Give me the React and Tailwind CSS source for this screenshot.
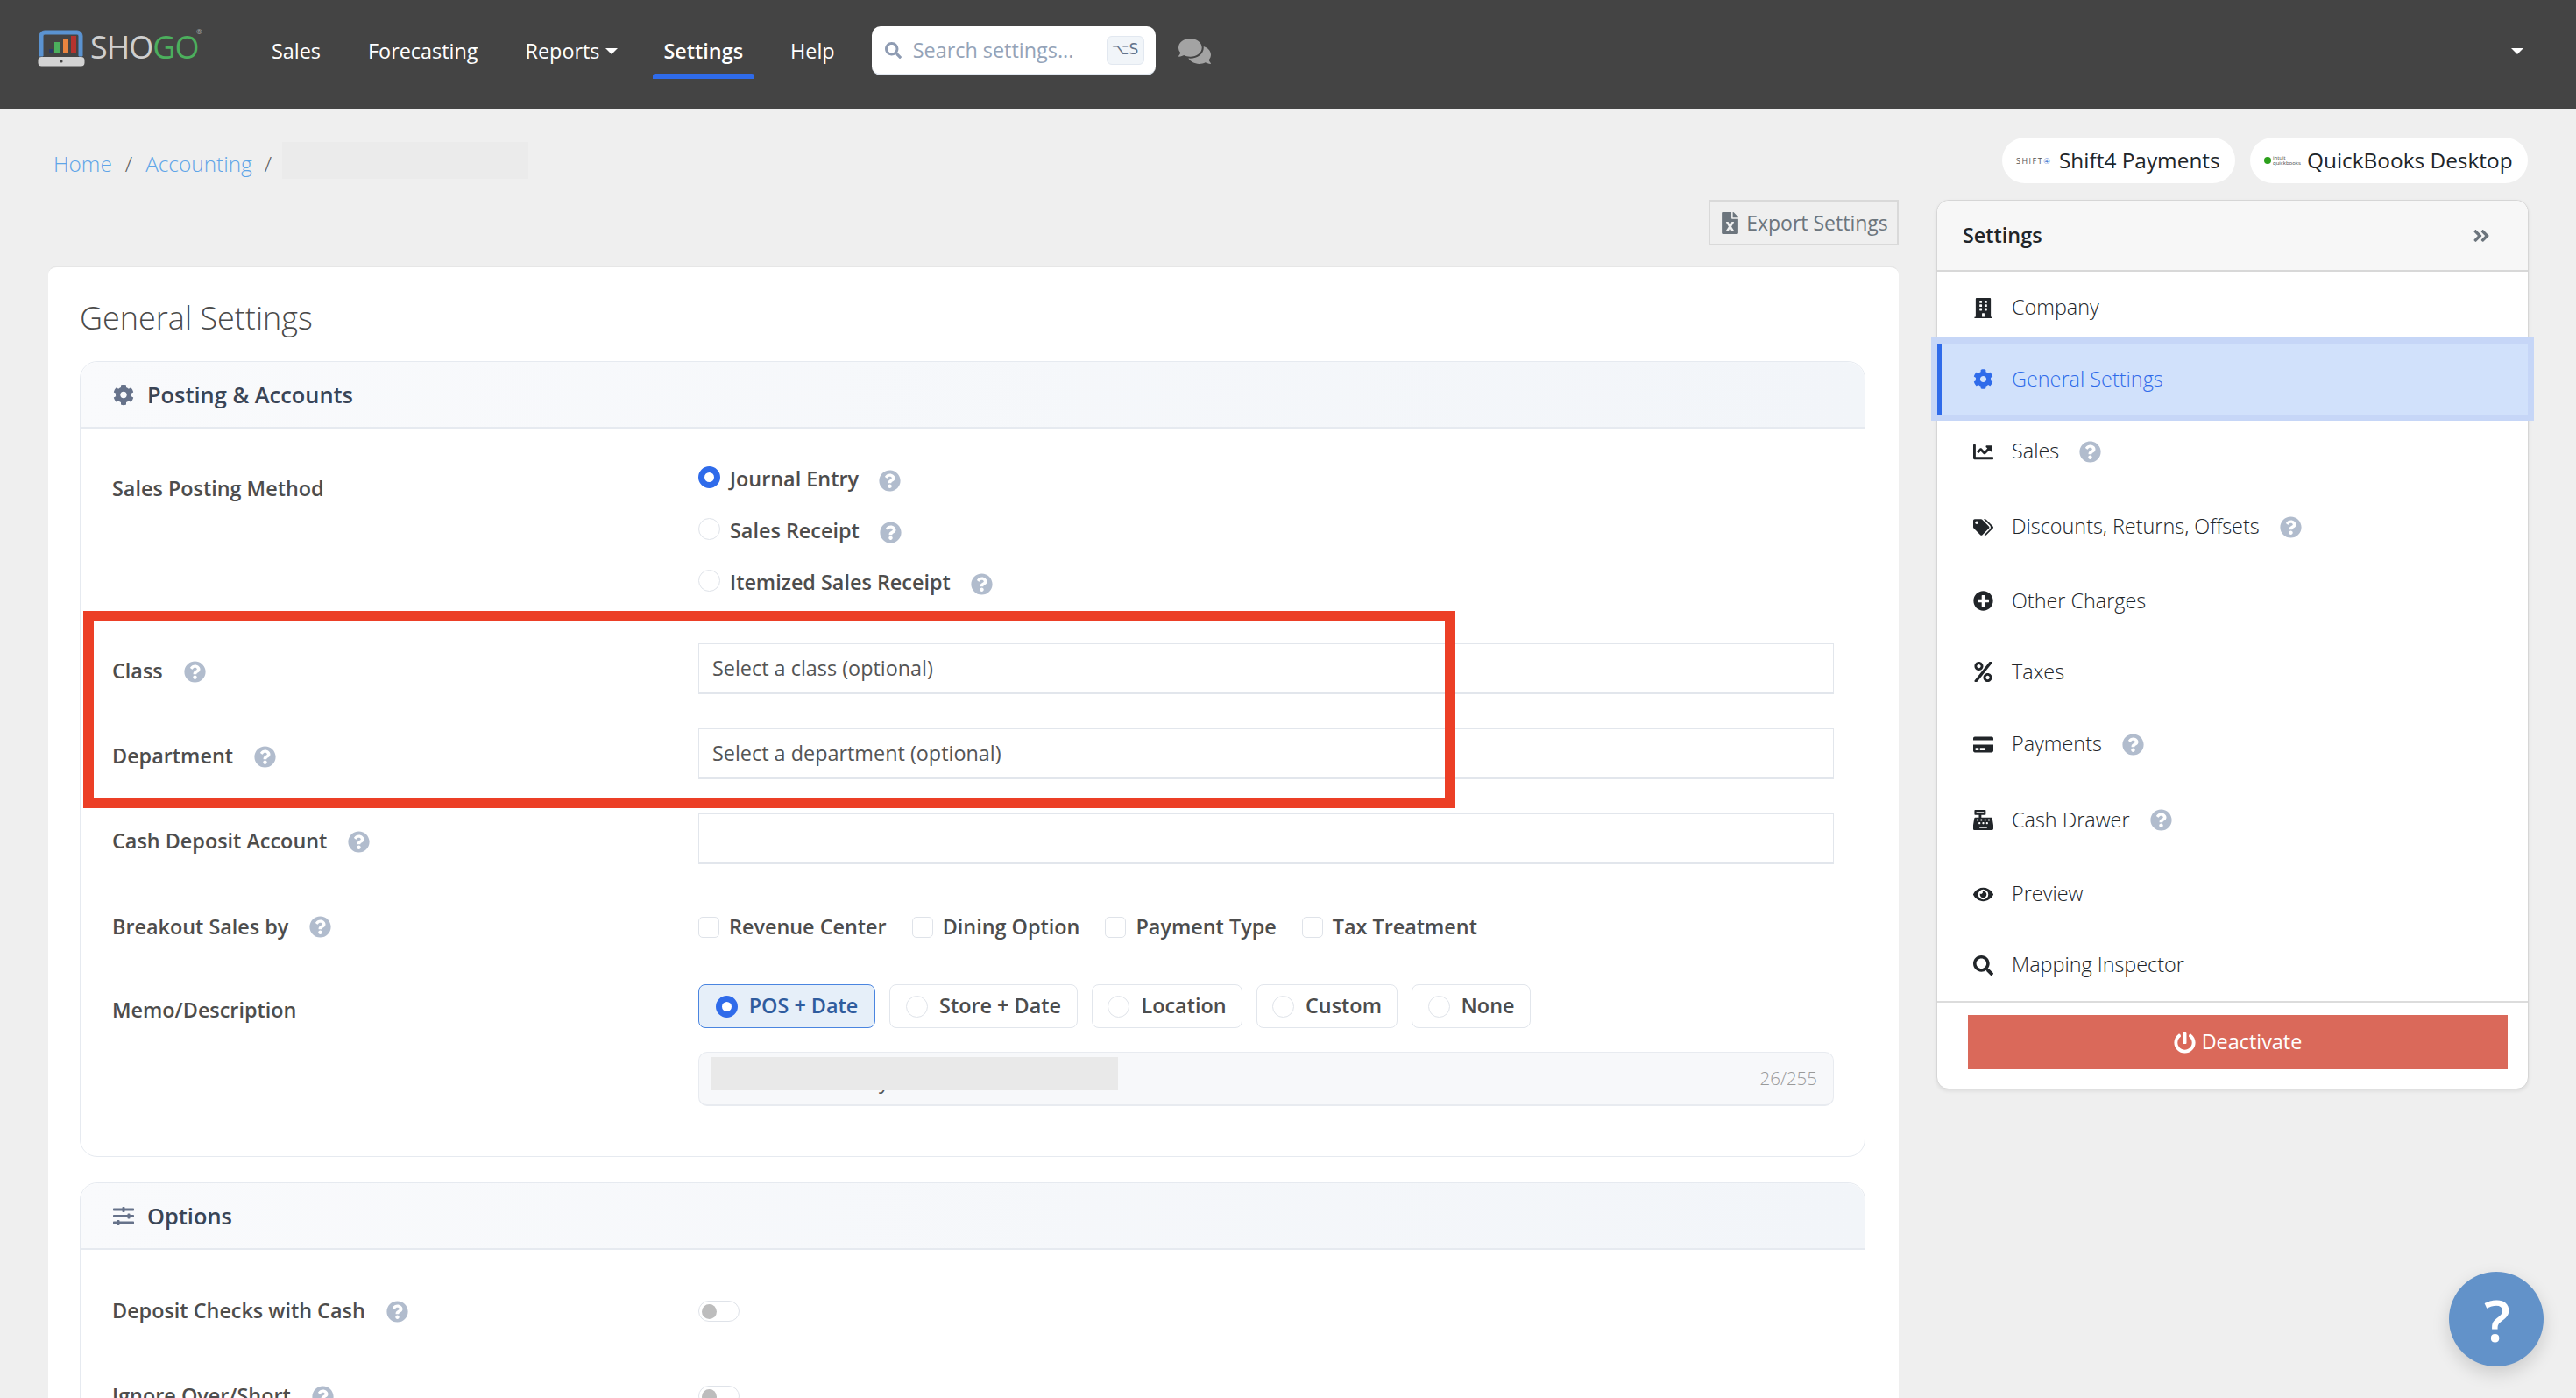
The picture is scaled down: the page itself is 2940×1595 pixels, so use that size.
import React from "react";
import {
  FaBuilding, FaCog, FaChartLine, FaTags, FaPlusCircle, FaPercent, FaCreditCard, FaCashRegister,
  FaEye, FaSearch, FaPowerOff, FaSlidersH, FaQuestionCircle, FaComments, FaFileExcel, FaAngleDoubleRight,
} from "react-icons/fa";

const Help = ({ className = "" }) => <FaQuestionCircle className={`text-[#b1bccd] text-[25px] shrink-0 ${className}`} />;

const Caret = ({ className = "" }) => (
  <span className={`inline-block w-0 h-0 border-x-[7px] border-x-transparent border-t-[7px] ${className}`} />
);

function Logo() {
  return (
    <div className="flex items-center w-[230px] ml-[43px] mt-[-10px] relative">
      <svg width="54" height="43" viewBox="0 0 54 43" className="shrink-0">
        <path d="M2 31V8a6 6 0 0 1 6-6h37a6 6 0 0 1 6 6v23h-4V8a2 2 0 0 0-2-2H8a2 2 0 0 0-2 2v23z" fill="#5b93d1" stroke="#5b93d1" strokeWidth="1" />
        <rect x="13" y="23" width="5" height="5" fill="#2a3a68" />
        <rect x="19" y="15" width="6" height="13" fill="#4caf5d" />
        <rect x="29" y="11" width="6" height="17" fill="#ea843f" />
        <rect x="38" y="8" width="6" height="20" fill="#b5332e" />
        <rect x="0.5" y="32" width="53" height="10.5" rx="4" fill="#d3d3d3" />
        <circle cx="27" cy="37" r="1.6" fill="#444" />
      </svg>
      <span className="ml-[6px] text-[36px] leading-none font-medium text-[#cfcfcf] tracking-[-1px]">
        SHO<span className="text-[#4caf5d]">GO</span>
      </span>
      <span className="absolute left-[181px] top-[-1px] text-[8px] leading-none text-[#bbb]">®</span>
    </div>
  );
}

function NavBar() {
  return (
    <nav className="h-[124px] pb-[6px] bg-[#444444] flex items-center relative text-white text-[23.4px] shrink-0">
      <Logo />
      <span className="ml-[37px]">Sales</span>
      <span className="ml-[54px]">Forecasting</span>
      <span className="ml-[54px] flex items-center">Reports<Caret className="border-t-white ml-[6px]" /></span>
      <span className="ml-[53px] font-semibold relative">
        Settings
        <span className="absolute left-[-13px] right-[-13px] top-[43px] h-[6px] bg-[#2f6bea] rounded-t-[3px]" />
      </span>
      <span className="ml-[54px]">Help</span>
      <div className="ml-[42px] mt-[-2px] w-[324px] h-[56px] bg-white rounded-[10px] border-b-[2px] border-[#e2e8f0] flex items-center pl-[15px] pr-[13px] text-[#94a3b8]">
        <FaSearch className="text-[19px] text-[#8e9bb2]" />
        <span className="ml-[13px] pt-[2px] text-[23.4px] flex-1">Search settings...</span>
        <span className="w-[43px] h-[33px] rounded-[6px] border border-[#e2e8f0] bg-[#f1f5f9] text-[17px] flex items-center justify-center text-[#64748b] font-['DejaVu_Sans',sans-serif]">⌥S</span>
      </div>
      <FaComments className="ml-[26px] mt-[-2px] text-[37px] text-[#a3a3a3]" />
      <Caret className="absolute left-[2866px] top-[55px] border-t-white" />
    </nav>
  );
}

function Pill({ logo, text, className }) {
  return (
    <div className={`h-[52px] bg-white rounded-full flex items-center text-[24.4px] text-[#212529] ${className}`}>
      {logo}
      <span>{text}</span>
    </div>
  );
}

function BreadcrumbRow() {
  return (
    <div className="h-[52px] mt-[33px] flex justify-between pl-[61px] pr-[55px] shrink-0">
      <div className="flex items-center text-[24.4px] font-light h-[60px]">
        <span className="text-[#5ea5e8]">Home</span>
        <span className="text-[#5c5c5c] mx-[15px]">/</span>
        <span className="text-[#5ea5e8]">Accounting</span>
        <span className="text-[#5c5c5c] ml-[14px]">/</span>
        <span className="ml-[12px] w-[281px] h-[42px] mt-[-8px] bg-[#ebebeb]" />
      </div>
      <div className="flex gap-[17px]">
        <Pill
          className="w-[266px] pl-[16px]"
          text="Shift4 Payments"
          logo={<span className="w-[49px] text-[9px] tracking-[1.5px] text-[#555] leading-none">SHIFT<span className="text-[#4a7bd0]">④</span></span>}
        />
        <Pill
          className="w-[317px] pl-[16px]"
          text="QuickBooks Desktop"
          logo={
            <span className="w-[49px] flex items-center gap-[2px]">
              <span className="w-[8px] h-[8px] rounded-full bg-[#2ca01c]" />
              <span className="text-[6px] leading-[6px] text-[#444]">intuit<br />quickbooks</span>
            </span>
          }
        />
      </div>
    </div>
  );
}

function Label({ text, help, className = "" }) {
  return (
    <div className={`w-[669px] shrink-0 flex items-center text-[23.4px] font-semibold text-[#4d4d4d] ${className}`}>
      <span>{text}</span>
      {help && <Help className="ml-[24px]" />}
    </div>
  );
}

function Field({ label, help, placeholder, className = "" }) {
  return (
    <div className={`flex ${className}`}>
      <Label text={label} help={help} className="h-[58px] pt-[6px]" />
      <div className="flex-1 h-[58px] border border-[#e2e6ec] border-b-2 bg-white flex items-center pl-[15px] pt-[1px] text-[23.4px] text-[#555]">
        {placeholder}
      </div>
    </div>
  );
}

function Radio({ on, className = "" }) {
  return on ? (
    <span className={`w-[25px] h-[25px] rounded-full border-[7px] border-[#2f6bea] bg-white shrink-0 ${className}`} />
  ) : (
    <span className={`w-[25px] h-[25px] rounded-full border border-[#dfe3e9] bg-white shrink-0 ${className}`} />
  );
}

function RadioRow({ on, text }) {
  return (
    <div className="h-[59px] flex items-center">
      <Radio on={on} className="mt-[-4px]" />
      <span className="ml-[11px] text-[23.4px] font-semibold text-[#4d4d4d]">{text}</span>
      <Help className="ml-[23px] mt-[3px]" />
    </div>
  );
}

function Check({ text }) {
  return (
    <div className="flex items-center mr-[29px]">
      <span className="w-[24px] h-[24px] rounded-[5px] border border-[#dfe3e9] bg-white shrink-0" />
      <span className="ml-[11px] text-[23.4px] font-semibold text-[#4d4d4d]">{text}</span>
    </div>
  );
}

function MemoButton({ text, on, className }) {
  return (
    <div className={`h-[50px] rounded-[8px] border flex items-center justify-center gap-[13px] text-[23.4px] font-semibold ${on ? "bg-[#e6eff9] border-[#4a85e0] text-[#2f5c9e]" : "bg-white border-[#e2e6ec] text-[#4d4d4d]"} ${className}`}>
      <Radio on={on} />
      <span>{text}</span>
    </div>
  );
}

function SectionHead({ icon, text }) {
  return (
    <div className="h-[76px] bg-linear-to-r from-[#f9fafc] to-[#f2f5f9] border-b-2 border-[#e6eaf0] flex items-center pl-[37px] text-[25.4px] font-semibold text-[#3a4556] rounded-t-[20px]">
      <span className="w-[24px] flex justify-center text-[#66728a] text-[25px]">{icon}</span>
      <span className="ml-[15px]">{text}</span>
    </div>
  );
}

function Toggle() {
  return (
    <span className="block w-[47px] h-[24px] rounded-full border border-[#dfe3e9] bg-white relative">
      <span className="absolute left-[3px] top-[3px] w-[17px] h-[17px] rounded-full bg-[#bdbdbd]" />
    </span>
  );
}

function MainCard() {
  return (
    <div className="bg-white rounded-t-[10px] border-t-2 border-[#e6e6e6] mt-[23px] pl-[36px] pr-[38px] pt-[30px] flex-1 overflow-hidden">
      <h1 className="text-[36px] font-light text-[#4a4a4a] leading-[56px]">General Settings</h1>

      <section className="mt-[21px] border border-[#e6eaf0] rounded-[20px]">
        <SectionHead icon={<FaCog />} text="Posting & Accounts" />
        <div className="pl-[36px] pr-[35px] pt-[28px] pb-[57px]">
          <div className="flex">
            <Label text="Sales Posting Method" className="items-start pt-[23px]" />
            <div>
              <RadioRow on text="Journal Entry" />
              <RadioRow text="Sales Receipt" />
              <RadioRow text="Itemized Sales Receipt" />
            </div>
          </div>
          <Field className="mt-[40px]" label="Class" help placeholder="Select a class (optional)" />
          <Field className="mt-[39px]" label="Department" help placeholder="Select a department (optional)" />
          <Field className="mt-[39px]" label="Cash Deposit Account" help placeholder="" />
          <div className="flex mt-[43px] h-[58px] items-center">
            <Label text="Breakout Sales by" help />
            <Check text="Revenue Center" />
            <Check text="Dining Option" />
            <Check text="Payment Type" />
            <Check text="Tax Treatment" />
          </div>
          <div className="flex mt-[36px]">
            <Label text="Memo/Description" className="h-[50px] pt-[9px]" />
            <div className="flex gap-[16px]">
              <MemoButton on text="POS + Date" className="w-[202px]" />
              <MemoButton text="Store + Date" className="w-[215px]" />
              <MemoButton text="Location" className="w-[172px]" />
              <MemoButton text="Custom" className="w-[161px]" />
              <MemoButton text="None" className="w-[136px]" />
            </div>
          </div>
          <div className="flex mt-[27px]">
            <div className="w-[669px] shrink-0" />
            <div className="flex-1 h-[62px] bg-[#f7f8fa] border border-[#e8ebf0] border-b-2 rounded-[10px] relative flex items-center justify-end pr-[18px]">
              <span className="text-[20.5px] font-light text-[#9a9a9a]">26/255</span>
              <span className="absolute left-[205px] top-[20px] text-[24px] leading-none text-[#555]">y</span>
              <span className="absolute left-[13px] top-[5px] w-[465px] h-[38px] bg-[#e9e9e9]" />
            </div>
          </div>
        </div>
      </section>

      <section className="mt-[29px] border border-[#e6eaf0] rounded-t-[20px] pb-[60px]">
        <SectionHead icon={<FaSlidersH />} text="Options" />
        <div className="pl-[36px] pr-[35px] pt-[58px]">
          <div className="flex h-[24px] items-center">
            <Label text="Deposit Checks with Cash" help />
            <Toggle />
          </div>
          <div className="flex h-[24px] items-center mt-[73px]">
            <Label text="Ignore Over/Short" help />
            <Toggle />
          </div>
        </div>
      </section>
    </div>
  );
}

const items = [
  { t: "Company", i: <FaBuilding />, h: "h-[82px]" },
  { t: "General Settings", i: <FaCog />, h: "h-[81px]", active: true },
  { t: "Sales", i: <FaChartLine />, h: "h-[84px]", help: true },
  { t: "Discounts, Returns, Offsets", i: <FaTags />, h: "h-[88px]", help: true },
  { t: "Other Charges", i: <FaPlusCircle />, h: "h-[81px]" },
  { t: "Taxes", i: <FaPercent />, h: "h-[81px]" },
  { t: "Payments", i: <FaCreditCard />, h: "h-[84px]", help: true },
  { t: "Cash Drawer", i: <FaCashRegister />, h: "h-[89px]", help: true },
  { t: "Preview", i: <FaEye />, h: "h-[80px]" },
  { t: "Mapping Inspector", i: <FaSearch />, h: "h-[82px]" },
];

function Sidebar() {
  return (
    <aside className="w-[676px] shrink-0 h-[1015px] bg-white rounded-[14px] border border-[#d6d6d6] shadow-[0_2px_4px_rgba(0,0,0,0.08)] flex flex-col">
      <div className="h-[81px] shrink-0 bg-[#f7f7f7] rounded-t-[14px] border-b-2 border-[#d8d8d8] flex items-center justify-between pl-[29px] pr-[42px] pt-[1px] text-[23.4px] font-semibold text-[#212529]">
        <span>Settings</span>
        <FaAngleDoubleRight className="text-[22px] text-[#6c757d]" />
      </div>
      {items.map((it) => (
        <div
          key={it.t}
          className={`${it.h} shrink-0 flex items-center text-[23.4px] font-light ${it.active ? "bg-[#d1e1fb] border-l-[5px] border-[#2f6bea] text-[#2f6bea] shadow-[0_0_0_7px_#c6d6f7] relative pl-[32px]" : "text-[#212529] pl-[37px]"}`}
        >
          <span className={`w-[30px] flex justify-center text-[23px] ${it.active ? "text-[#2f6bea]" : "text-[#212529]"}`}>{it.i}</span>
          <span className="ml-[18px]">{it.t}</span>
          {it.help && <Help className="ml-[23px]" />}
        </div>
      ))}
      <div className="border-t-2 border-[#dcdcdc] pt-[14px] pl-[35px]">
        <div className="w-[616px] h-[62px] bg-[#da695a] text-white text-[23.4px] flex items-center justify-center gap-[7px]">
          <FaPowerOff className="text-[25px]" />
          <span>Deactivate</span>
        </div>
      </div>
    </aside>
  );
}

export default function App() {
  return (
    <div className="h-screen overflow-hidden bg-[#efefef] relative flex flex-col font-['Open_Sans',sans-serif]">
      <NavBar />
      <BreadcrumbRow />
      <div className="flex pl-[55px] gap-[43px] mt-[19px] flex-1 min-h-0">
        <div className="w-[2112px] shrink-0 flex flex-col">
          <div className="flex justify-end shrink-0">
            <div className="h-[52px] w-[217px] border-2 border-[#d9d9d9] flex items-center justify-center gap-[6px] text-[23px] text-[#6c757d]">
              <FaFileExcel className="text-[25px]" />
              <span>Export Settings</span>
            </div>
          </div>
          <MainCard />
        </div>
        <Sidebar />
      </div>

      <div className="absolute left-[95px] top-[697px] w-[1566px] h-[225px] border-[12px] border-[#ec3f26]" />

      <div className="absolute left-[2795px] top-[1451px] w-[108px] h-[108px] rounded-full bg-[#6292c9] shadow-[0_8px_20px_rgba(0,0,0,0.15)] flex items-center justify-center pl-[2px] text-white text-[66px] font-semibold leading-none">
        ?
      </div>
    </div>
  );
}
